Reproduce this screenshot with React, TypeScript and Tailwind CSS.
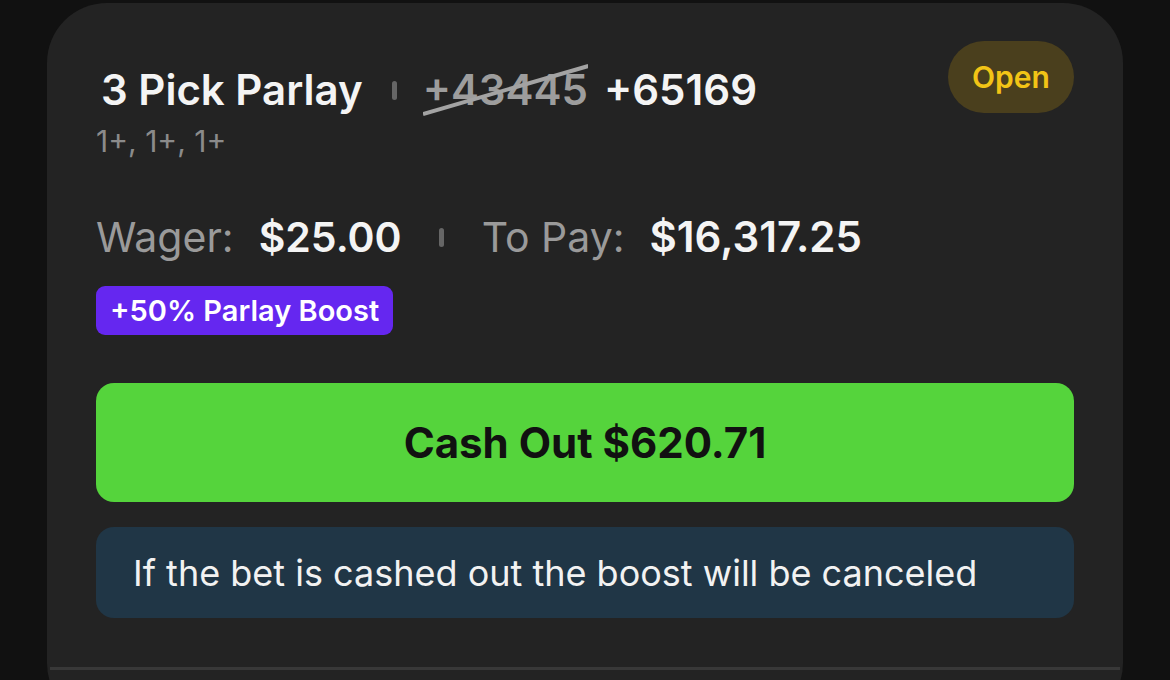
const font = { fontFamily: "Inter, 'Noto Sans', sans-serif" };

function Pip() {
  return <span className="inline-block w-[5px] h-[19px] rounded-full bg-[#666666]" />;
}

export default function App() {
  return (
    <div
      className="w-full h-[680px] overflow-hidden bg-[#111111] pl-[47px] pt-[3px]"
      style={font}
    >
      <div className="w-[1076px] h-[720px] rounded-[60px] bg-[#232323]">
        <div className="px-[49px] pt-[38px]">
          {/* Header */}
          <div className="flex items-start justify-between">
            <div className="pt-[24px]">
              <div className="flex items-center">
                <span className="ml-[5px] text-[42px] leading-[50px] font-semibold text-[#f4f4f4]">
                  3 Pick Parlay
                </span>
                <span className="ml-[29px] mr-[26px] flex items-center">
                  <Pip />
                </span>
                <span className="relative text-[42px] leading-[50px] font-semibold text-[#9d9d9d]">
                  +43445
                  <svg
                    className="absolute left-0 top-[-2px] w-full h-[58px]"
                    viewBox="0 0 100 58"
                    preserveAspectRatio="none"
                    aria-hidden="true"
                  >
                    <line
                      x1="0"
                      y1="51"
                      x2="100"
                      y2="3"
                      stroke="#a3a3a3"
                      strokeWidth="4"
                      vectorEffect="non-scaling-stroke"
                    />
                  </svg>
                </span>
                <span className="ml-[16px] text-[42px] leading-[50px] font-semibold text-[#f4f4f4]">
                  +65169
                </span>
              </div>
              <div className="mt-[8px] text-[30px] leading-[36px] text-[#8b8b8b]">
                1+, 1+, 1+
              </div>
            </div>
            <div className="h-[72px] w-[126px] rounded-full bg-[#4a3f1d] flex items-center justify-center text-[30px] font-semibold text-[#f2c416]">
              Open
            </div>
          </div>

          {/* Wager row */}
          <div className="mt-[53px] flex items-center leading-[50px]">
            <span className="text-[41px] text-[#9a9a9a]">Wager:</span>
            <span className="ml-[25px] text-[41px] font-semibold text-[#f4f4f4]">$25.00</span>
            <span className="ml-[37px] mr-[38px] flex items-center">
              <Pip />
            </span>
            <span className="text-[41px] text-[#9a9a9a]">To Pay:</span>
            <span className="ml-[25px] text-[42px] font-semibold text-[#f4f4f4]">$16,317.25</span>
          </div>

          {/* Boost tag */}
          <div className="mt-[24px] flex">
            <span className="h-[49px] px-[14px] rounded-[9px] bg-[#6527f0] flex items-center text-[29px] font-semibold text-white">
              +50% Parlay Boost
            </span>
          </div>

          {/* Cash out */}
          <button className="mt-[48px] w-full h-[119px] rounded-[18px] bg-[#55d43c] flex items-center justify-center text-[42px] font-bold text-[#111111]">
            Cash Out $620.71
          </button>

          {/* Info */}
          <div className="mt-[25px] h-[91px] rounded-[18px] bg-[#203646] flex items-center px-[37px] text-[36px] text-[#f2f2f2]">
            If the bet is cashed out the boost will be canceled
          </div>
        </div>

        <div className="mt-[49px] mx-[3px] h-[3px] bg-[#383838]" />
      </div>
    </div>
  );
}
